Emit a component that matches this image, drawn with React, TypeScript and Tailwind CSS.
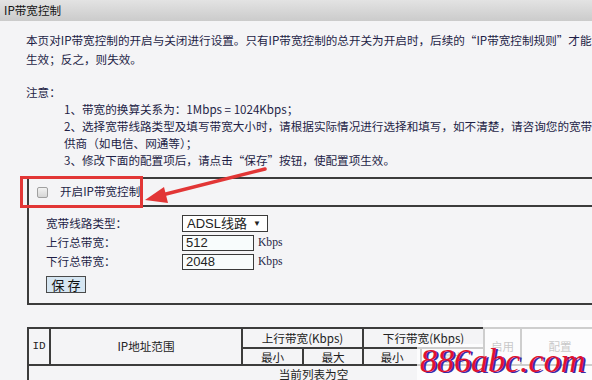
export default function App() {
  const bc = "border-[#3c3c3c]";
  return (
    <div className="relative w-[592px] h-[380px] overflow-hidden bg-[#f4f4f6] text-[11.6px] text-[#1e1e46] font-[family-name:'Noto_Sans_CJK_SC',sans-serif]">
      <div className="h-[21px] bg-gradient-to-b from-[#e3e3e3] to-[#cbcbcb] pl-[4px] leading-[21px] text-[#141414]">
        IP带宽控制
      </div>
      <div className="pl-[26px] pt-[10px] leading-[19px] whitespace-nowrap">
        <div>本页对IP带宽控制的开启与关闭进行设置。只有IP带宽控制的总开关为开启时，后续的“IP带宽控制规则”才能够</div>
        <div>生效；反之，则失效。</div>
      </div>
      <div className="mt-[15px] leading-[17px] whitespace-nowrap">
        <div className="pl-[26px]">注意：</div>
        <div className="pl-[64px]">1、带宽的换算关系为：1Mbps = 1024Kbps；</div>
        <div className="pl-[64px]">2、选择宽带线路类型及填写带宽大小时，请根据实际情况进行选择和填写，如不清楚，请咨询您的宽带提</div>
        <div className="pl-[64px]">供商（如电信、网通等）；</div>
        <div className="pl-[64px]">3、修改下面的配置项后，请点击“保存”按钮，使配置项生效。</div>
      </div>

      <div className={`ml-[27px] mt-[8px] w-[600px] border-l-2 border-t-2 border-b-2 ${bc}`}>
        <div className={`h-[28px] flex items-center border-b-2 ${bc} pl-[8px] gap-[12px]`}>
          <span className="w-[11px] h-[11px] rounded-[2px] border border-[#a0a0a0] bg-gradient-to-b from-[#f2f2f2] to-[#d6d6d6]" />
          <span>开启IP带宽控制</span>
        </div>
        <div className="pl-[17px] pt-[8px] pb-[10px]">
          <div className="flex items-center h-[17px]">
            <span className="w-[136px]">宽带线路类型：</span>
            <div className="w-[86px] h-[17px] border border-[#3a3a3a] bg-white flex items-center justify-between pl-[4px] pr-[6px] text-[13px] text-[#222] font-[family-name:'Liberation_Sans','Noto_Sans_CJK_SC',sans-serif]">
              <span className="leading-[15px]">ADSL线路</span>
              <span className="text-[8px] leading-[15px]">▼</span>
            </div>
          </div>
          <div className="flex items-center h-[16px] mt-[3px]">
            <span className="w-[136px]">上行总带宽：</span>
            <div className="w-[72px] h-[16px] border border-[#3a3a3a] bg-[#f8fcfc] pl-[3px] text-[13px] leading-[14px] text-[#222] font-[family-name:'Liberation_Sans',sans-serif]">512</div>
            <span className="ml-[4px] font-[family-name:'Liberation_Serif',serif]">Kbps</span>
          </div>
          <div className="flex items-center h-[16px] mt-[3px]">
            <span className="w-[136px]">下行总带宽：</span>
            <div className="w-[72px] h-[16px] border border-[#3a3a3a] bg-[#f8fcfc] pl-[3px] text-[13px] leading-[14px] text-[#222] font-[family-name:'Liberation_Sans',sans-serif]">2048</div>
            <span className="ml-[4px] font-[family-name:'Liberation_Serif',serif]">Kbps</span>
          </div>
          <div className="mt-[6px] w-[40px] h-[17px] border border-[#4a4a4a] bg-[#d6e6f2] flex items-center justify-center text-[13px] leading-[15px] text-[#111]">
            保 存
          </div>
        </div>
      </div>

      <table className={`ml-[27px] mt-[22px] w-[571px] table-fixed border-collapse border-2 ${bc} text-[#222] text-center`}>
        <colgroup>
          <col className="w-[22px]" />
          <col className="w-[192px]" />
          <col className="w-[61px]" />
          <col className="w-[60px]" />
          <col className="w-[58px]" />
          <col className="w-[63px]" />
          <col className="w-[37px]" />
          <col className="w-[78px]" />
        </colgroup>
        <tbody>
          <tr className="h-[20px]">
            <td rowSpan={2} className={`border-2 ${bc} p-0 font-[family-name:'Liberation_Mono',monospace] text-[11px]`}>ID</td>
            <td rowSpan={2} className={`border-2 ${bc} p-0`}>IP地址范围</td>
            <td colSpan={2} className={`border-2 ${bc} p-0 leading-[16px]`}>上行带宽(Kbps)</td>
            <td colSpan={2} className={`border-2 ${bc} p-0 leading-[16px]`}>下行带宽(Kbps)</td>
            <td rowSpan={2} className={`border-2 ${bc} p-0`}>启用</td>
            <td rowSpan={2} className={`border-2 ${bc} p-0`}>配置</td>
          </tr>
          <tr className="h-[17px]">
            <td className={`border-2 ${bc} p-0 leading-[14px]`}>最小</td>
            <td className={`border-2 ${bc} p-0 leading-[14px]`}>最大</td>
            <td className={`border-2 ${bc} p-0 leading-[14px]`}>最小</td>
            <td className={`border-2 ${bc} p-0 leading-[14px]`}>最大</td>
          </tr>
          <tr className="h-[18px]">
            <td colSpan={8} className={`border-2 ${bc} p-0 leading-[16px]`}>当前列表为空</td>
          </tr>
        </tbody>
      </table>

      {/* faded watermark area */}
      <div className="absolute left-[483px] top-[320px] w-[109px] h-[24px] bg-white/75" />
      <div className="absolute left-[417px] top-[344px] w-[175px] h-[36px] bg-white/75" />
      <div className="absolute left-[420px] top-[342px] text-[34px] leading-[38px] italic text-[#e0122e] font-[family-name:'Liberation_Serif',serif] [text-shadow:2px_1px_0_#3a2aa8]">
        886abc.com
      </div>

      {/* red annotation */}
      <div className="absolute left-[20px] top-[176px] w-[123px] h-[32px] border-[3px] border-[#e23636]" />
      <svg className="absolute left-0 top-0" width="592" height="380" viewBox="0 0 592 380">
        <line x1="265" y1="169" x2="162" y2="195" stroke="#e23636" strokeWidth="3.5" strokeLinecap="round" />
        <polygon points="145,200 168,203 164,187" fill="#e23636" />
      </svg>
    </div>
  );
}
